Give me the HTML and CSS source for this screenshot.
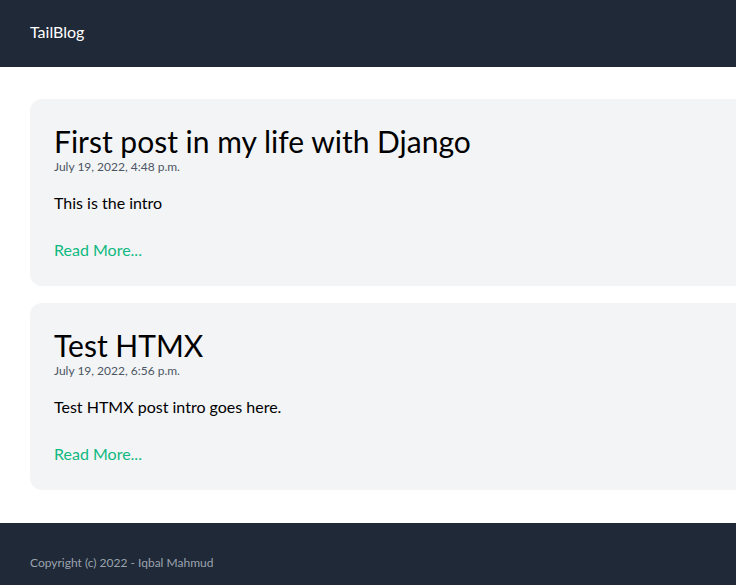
FILE: index.html
```html
<!DOCTYPE html>
<html lang="en">
<head>
<meta charset="utf-8">
<title>TailBlog</title>
<link rel="stylesheet" href="styles.css">
</head>
<body>
<nav class="topbar">
  <a class="brand" href="#">TailBlog</a>
</nav>
<main class="posts">
  <article class="post">
    <h2 class="post-title">First post in my life with Django</h2>
    <p class="post-date">July 19, 2022, 4:48 p.m.</p>
    <p class="post-intro">This is the intro</p>
    <a class="read-more" href="#">Read More...</a>
  </article>
  <article class="post">
    <h2 class="post-title">Test HTMX</h2>
    <p class="post-date">July 19, 2022, 6:56 p.m.</p>
    <p class="post-intro">Test HTMX post intro goes here.</p>
    <a class="read-more" href="#">Read More...</a>
  </article>
</main>
<footer class="footer">
  <p class="copyright">Copyright (c) 2022 - Iqbal Mahmud</p>
</footer>
</body>
</html>
```
FILE: styles.css
```css
html, body {
  margin: 0;
  padding: 0;
  overflow-x: hidden;
}
body {
  font-family: Lato, "Noto Sans", sans-serif;
  background: #ffffff;
  color: #000000;
}
.topbar {
  background: #1f2937;
  padding: 20px 30px 23px;
  line-height: 24px;
}
.brand {
  color: #ffffff;
  font-size: 16px;
  text-decoration: none;
}
.posts {
  padding: 32px 0 33px 30px;
  display: flex;
  flex-direction: column;
  gap: 17px;
}
.post {
  width: 800px;
  background: #f3f4f6;
  border-radius: 12px;
  padding: 24px;
  display: flex;
  flex-direction: column;
  align-items: flex-start;
}
.post-title {
  margin: 0;
  font-size: 30px;
  line-height: 36px;
  font-weight: 400;
}
.post-date {
  margin: 0;
  font-size: 12px;
  line-height: 16px;
  color: #4b5563;
}
.post-intro {
  margin: 16px 0 23px;
  font-size: 16px;
  line-height: 24px;
}
.read-more {
  color: #10b981;
  font-size: 16px;
  line-height: 24px;
  text-decoration: none;
}
.footer {
  background: #1f2937;
  padding: 32px 30px;
}
.copyright {
  margin: 0;
  font-size: 12px;
  line-height: 16px;
  color: #9ca3af;
}
```
